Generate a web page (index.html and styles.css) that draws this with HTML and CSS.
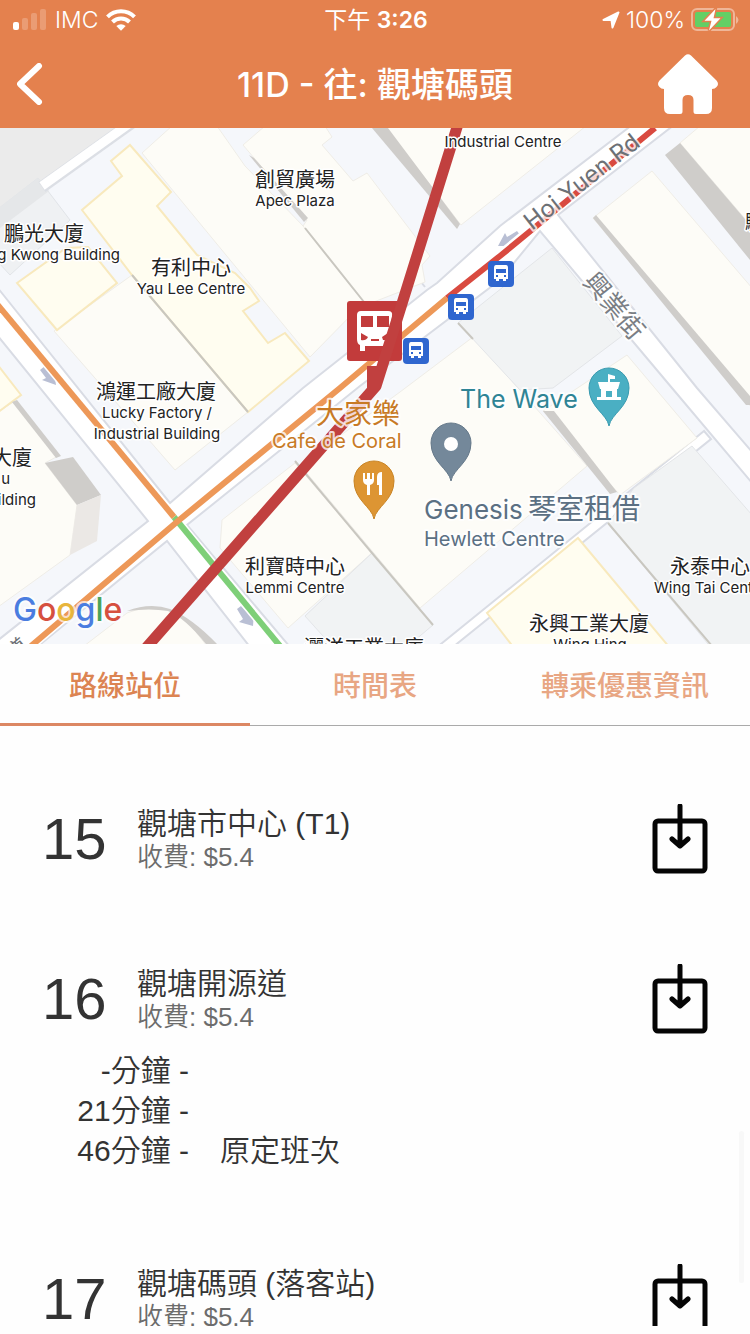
FILE: index.html
```html
<!DOCTYPE html>
<html lang="zh-Hant">
<head>
<meta charset="utf-8">
<meta name="viewport" content="width=device-width, initial-scale=1">
<title>11D - 往: 觀塘碼頭</title>
<link rel="stylesheet" href="styles.css">
</head>
<body>
<div class="app">
  <header class="header">
    <div class="status">
      <div class="status-side">
        <svg class="signal" viewBox="0 0 34 22" aria-hidden="true">
          <rect x="0" y="13" width="6" height="8" rx="2" fill="#fff"/>
          <g fill="#fff" fill-opacity=".22"><rect x="9" y="9" width="6" height="12" rx="2"/><rect x="18" y="4" width="6" height="17" rx="2"/><rect x="27" y="0" width="6" height="21" rx="2"/></g>
        </svg>
        <span>IMC</span>
        <svg class="wifi" viewBox="0 0 30 22" aria-hidden="true">
          <g fill="none" stroke="#fff" stroke-width="4"><path d="M1.500 7.800A19 19 0 0 1 28.500 7.800"/><path d="M6.500 13A12 12 0 0 1 23.500 13"/></g>
          <path d="M10.300 17A7 7 0 0 1 19.700 17L15 21.800Z" fill="#fff"/>
        </svg>
      </div>
      <div class="clock">下午 <b>3:26</b></div>
      <div class="status-side status-right">
        <svg class="location" viewBox="0 0 18 18" aria-hidden="true"><path d="M16.500 1.500L10.500 16.500L9.500 9H1.500Z" fill="#fff" stroke="#fff" stroke-width="2" stroke-linejoin="round"/></svg>
        <span>100%</span>
        <svg class="battery" viewBox="0 0 48 24" aria-hidden="true">
          <rect x="1" y="1" width="42" height="21" rx="5" fill="none" stroke="#fff" stroke-opacity=".42" stroke-width="2"/>
          <path d="M45 8Q50 12 45 16Z" fill="#fff" fill-opacity=".42"/>
          <rect x="4" y="4" width="36" height="15" rx="2" fill="#63cf65"/>
          <path d="M24.500 1L13.500 12.800H20.500L18 22.500L29.500 10.300H22.500Z" fill="#fff" stroke="#e4814e" stroke-width="3" paint-order="stroke"/>
        </svg>
      </div>
    </div>
    <nav class="nav">
      <button class="icon-button" aria-label="返回"><svg class="back" viewBox="0 0 26 42"><path d="M22 3L3 21L22 39" fill="none" stroke="#fff" stroke-width="6" stroke-linecap="round" stroke-linejoin="round"/></svg></button>
      <h1>11D - 往: 觀塘碼頭</h1>
      <button class="icon-button" aria-label="主頁"><svg class="home" viewBox="0 0 60 60"><path d="M27 1.500Q30-1 33 1.500L58.500 26.500Q61.500 30 58.500 33Q57 35 54 35V54Q54 60 48 60H38Q35.500 60 35.500 57.500V46Q35.500 41 30 41Q24.500 41 24.500 46V57.500Q24.500 60 22 60H12Q6 60 6 54V35Q3 35 1.500 33Q-1.500 30 1.500 26.500Z" fill="#fff"/></svg></button>
    </nav>
  </header>

  <svg class="map" viewBox="0 128 750 516" role="img" aria-label="地圖">
    <rect y="128" width="750" height="516" fill="#f5f7fb"/>
    <path d="M0 128H118L0 214Z" fill="#ebebeb"/>
    <path d="M-2 209L38 178L70 220L10 275L-2 262Z" fill="#eff1f3" stroke="#e1e4e8"/>
    <path d="M0 207L38 178L49 191L0 228Z" fill="#e5e7e9"/>
    <g fill="none" stroke-linecap="butt">
      <path d="M42 187L133 122" stroke="#dcdfe5" stroke-width="12"/>
      <path d="M42 186L133 121" stroke="#fff" stroke-width="9"/>
    </g>

    <g class="roads">
      <path d="M-3 287L170 503L303 388L427 290L437 283L500 226L632 125H674L558 215L697 388L753 453V484L672 388L540 231L500 280L360 386L187 525L290 647H250L167 541L37 647H-3V641L148 521L-3 335Z"/>
      <path d="M704 431L436 648L443 655L711 439Z"/>
      <path d="M320 155L425 287"/>
    </g>

    <g class="tan">
      <path d="M142 153L172 126H217L245 166L305 228L364 302L310 357Z"/>
      <path d="M243 145L265 126H325L332 137L322 145L353 181L367 173L430 256L422 265L425 282L366 305L303 226L307 220Z"/>
      <path d="M385 126H586L461 225Z"/>
      <path d="M54 331L132 275L248 412L175 470Z"/>
      <path d="M-2 412L15 401L58 456L45 463L77 505L70 555L-2 607Z"/>
      <path d="M652 171L752 288V408L593 218Z"/>
      <path d="M680 143L700 126H752V227Z"/>
      <path d="M473 337L587 466L420 608L300 465L400 392Z"/>
      <path d="M627 355L697 438L620 495L543 411Z"/>
      <path d="M295 463L372 553L288 628L220 548L222 520Z"/>
      <path d="M127 613Q160 600 185 618L207 646H84Z"/>
    </g>
    <g class="yellow">
      <path d="M130 145L171 192L157 206L197 255L235 273L250 288L259 301L243 311L268 343L285 333L309 361L248 412L132 275L82 210L122 176L111 161Z"/>
      <path d="M17 283L66 248L88 247L117 283L57 330Z"/>
      <path d="M-3 364L21 395L-3 413Z"/>
      <path d="M578 538L670 648H514L487 613Z"/>
    </g>
    <g fill="#f1f3f4" stroke="#e3e5e8">
      <path d="M552 248L622 336L553 388L520 390L458 323Z"/>
      <path d="M372 553L433 625L408 646H332L305 616Z"/>
      <path d="M692 446L752 515V650H713L608 523L634 488Z"/>
    </g>
    <g fill="#cfcdca">
      <path d="M372 128H388L460 224L457 229Z"/>
      <path d="M665 155L680 143L750 225V260Z"/>
      <path d="M593 218L596 215L750 396V405H746Z"/>
      <path d="M543 411H554L617 492L610 494Z"/>
      <path d="M45 463L73 457L101 495L77 505Z"/>
      <path d="M77 505L101 495L97 541L70 555Z" fill="#ebe8e5"/>
      <path d="M12 402L17 400L61 456L56 458Z"/>
      <path d="M127 611Q150 602 170 609Q192 618 217 644H206Q185 618 168 611Q150 608 127 611Z"/>
      <path d="M249 155L254 158L308 218L304 222Z"/>
    </g>
    <g fill="none" stroke="#c9c7c0" stroke-width="2">
      <path d="M132 275L248 412M305 228L364 302M295 461L372 553L433 625M458 323L473 339M608 523L712 646"/>
    </g>

    <g fill="#b9bfd4">
      <path d="M498 246L505 233L507 237L517 231L520 235L509 242L512 246Z"/>
      <path d="M40 370L45 366L51 374L54 371L56 385L42 380L46 378Z"/>
      <path d="M237 609L241 606L249 614L254 612L253 626L239 622L243 619Z"/>
    </g>

    <g fill="none" stroke-width="9" stroke="#fff">
      <path d="M-3 304L174 517L280 646M31 646L178 521L447 298L655 128"/>
    </g>
    <g fill="none" stroke-width="6">
      <path d="M174 517L280 646" stroke="#7ecf78"/>
      <path d="M-3 304L174 517" stroke="#ed9858"/>
      <path d="M31 646L178 521L340 388L447 298" stroke="#ed9858"/>
      <path d="M447 298L500 256L528 233L655 128" stroke="#d94a40"/>
    </g>

    <rect x="347" y="301" width="55" height="60" rx="3" fill="#c23b3b"/>
    <path d="M361 311H388Q393 311 392 316L389 341Q389 346 384 346H365V351H360V345Q357 344 357 339V315Q357 311 361 311Z" fill="#fff"/>
    <path d="M361 316H373V327H361ZM377 316H389V327H377ZM361 333L368 337Q366 341 361 340ZM382 337L388 333V340H383ZM371 339H379V341H371Z" fill="#c23b3b"/>
    <g fill="none" stroke="#c1403f" stroke-width="11" stroke-linejoin="round">
      <path d="M458 124L400 310L376 386L146 648"/>
      <path d="M373 366V388" stroke-width="12"/>
    </g>

    <g class="pins">
      <g class="stop"><rect x="448" y="294" width="26" height="26" rx="4"/><path d="M456 298H466Q468 298 468 301V312H466V314H463V312H459V314H456V312H454V301Q454 298 456 298Z"/><path d="M456 302H466V306H456ZM456 308H458V310H456ZM464 308H466V310H464Z"/></g>
      <g class="stop"><rect x="488" y="261" width="26" height="26" rx="4"/><path d="M496 265H506Q508 265 508 268V279H506V281H503V279H499V281H496V279H494V268Q494 265 496 265Z"/><path d="M496 269H506V273H496ZM496 275H498V277H496ZM504 275H506V277H504Z"/></g>
      <g class="stop"><rect x="403" y="338" width="26" height="26" rx="4"/><path d="M411 342H421Q423 342 423 345V356H421V358H418V356H414V358H411V356H409V345Q409 342 411 342Z"/><path d="M411 346H421V350H411ZM411 352H413V354H411ZM419 352H421V354H419Z"/></g>
    </g>

    <path d="M374 519C372 507 354 500 354 481A20 20 0 0 1 394 481C394 500 376 507 374 519Z" fill="#dd9533" stroke="#c98425"/>
    <path d="M363 473H365V479H367V473H370V479H372V473H374V480Q374 484 370 485V495H367V485Q363 484 363 480ZM377 477Q377 472 382 472V495H379V485H377Z" fill="#fff"/>
    <path d="M451 481C449 469 431 462 431 443A20 20 0 0 1 471 443C471 462 453 469 451 481Z" fill="#74889a" stroke="#66798a"/>
    <circle cx="451" cy="444" r="7" fill="#fff"/>
    <path d="M609 426C607 414 589 407 589 388A20 20 0 0 1 629 388C629 407 611 414 609 426Z" fill="#4aafc3" stroke="#3a9bb0"/>
    <path d="M608 374L615 376V379H610V382H620L618 389H617V397H621V400H597V397H601V389H600L598 382H608Z" fill="#fff"/>
    <path d="M606 391H612V397H606Z" fill="#4aafc3"/>

    <g class="label">
      <g class="zh">
        <text x="295" y="187">創貿廣場</text><text x="44" y="241">鵬光大廈</text><text x="191" y="275">有利中心</text>
        <text x="156" y="399">鴻運工廠大廈</text><text x="295" y="574">利寶時中心</text><text x="589" y="631">永興工業大廈</text>
        <text x="710" y="574">永泰中心</text><text x="364" y="655">灑洋工業大廈</text><text x="12" y="465">大廈</text>
        <text x="755" y="230">駿</text>
      </g>
      <text x="503" y="147">Industrial Centre</text><text x="295" y="206">Apec Plaza</text><text x="120" y="260" text-anchor="end">g Kwong Building</text>
      <text x="191" y="294">Yau Lee Centre</text><text x="157" y="418">Lucky Factory /</text><text x="157" y="439">Industrial Building</text>
      <text x="295" y="593">Lemmi Centre</text><text x="590" y="650">Wing Hing</text><text x="654" y="593" text-anchor="start">Wing Tai Centre</text>
      <text x="10" y="484" text-anchor="end">u</text><text x="36" y="505" text-anchor="end">ilding</text>
    </g>
    <g class="poi">
      <text x="316" y="424" font-size="28" fill="#c87a25">大家樂</text><text x="272" y="448" font-size="20" fill="#c87a25">Cafe de Coral</text>
      <text x="460" y="408" font-size="25" fill="#2f8495">The Wave</text>
      <text x="424" y="519" font-size="26" fill="#5b7083">Genesis</text><text x="528" y="519" font-size="28" fill="#5b7083">琴室租借</text>
      <text x="424" y="546" font-size="20" fill="#5b7083">Hewlett Centre</text>
      <text x="0" y="0" font-size="24" fill="#6c7075" transform="translate(532 231) rotate(-38)">Hoi Yuen Rd</text>
      <text x="0" y="0" font-size="26" fill="#7a7e84" transform="translate(582 282) rotate(50)">興業街</text>
      <text x="0" y="0" font-size="20" fill="#6c7075" transform="translate(14 660) rotate(-40)">道</text>
    </g>
    <text class="logo" x="13" y="621"><tspan fill="#4a7de0">G</tspan><tspan fill="#d6503f">o</tspan><tspan fill="#e8b53c">o</tspan><tspan fill="#4a7de0">g</tspan><tspan fill="#4aa35a">l</tspan><tspan fill="#d6503f">e</tspan></text>
  </svg>

  <div class="tabs" role="tablist">
    <button class="tab active" role="tab" aria-selected="true">路線站位</button>
    <button class="tab" role="tab" aria-selected="false">時間表</button>
    <button class="tab" role="tab" aria-selected="false">轉乘優惠資訊</button>
  </div>

  <main class="list">
    <ol class="stops">
      <li class="stop-item">
        <div class="stop-head">
          <span class="number">15</span>
          <div class="info"><h2>觀塘市中心 (T1)</h2><p>收費: $5.4</p></div>
          <button class="icon-button" aria-label="落車提示 15"><svg class="alight" viewBox="0 0 56 70"><rect x="3" y="17" width="50" height="50" rx="3"/><path d="M28 2V41M20 35L28 42L36 35"/></svg></button>
        </div>
      </li>
      <li class="stop-item">
        <div class="stop-head">
          <span class="number">16</span>
          <div class="info"><h2>觀塘開源道</h2><p>收費: $5.4</p></div>
          <button class="icon-button" aria-label="落車提示 16"><svg class="alight" viewBox="0 0 56 70"><rect x="3" y="17" width="50" height="50" rx="3"/><path d="M28 2V41M20 35L28 42L36 35"/></svg></button>
        </div>
        <ul class="times">
          <li><span class="eta">-分鐘 -</span></li>
          <li><span class="eta">21分鐘 -</span></li>
          <li><span class="eta">46分鐘 -</span><span>原定班次</span></li>
        </ul>
      </li>
      <li class="stop-item">
        <div class="stop-head">
          <span class="number">17</span>
          <div class="info"><h2>觀塘碼頭 (落客站)</h2><p>收費: $5.4</p></div>
          <button class="icon-button" aria-label="落車提示 17"><svg class="alight" viewBox="0 0 56 70"><rect x="3" y="17" width="50" height="50" rx="3"/><path d="M28 2V41M20 35L28 42L36 35"/></svg></button>
        </div>
      </li>
    </ol>
    <div class="scroll-thumb"></div>
  </main>
</div>
</body>
</html>
```
FILE: styles.css
```css
* { box-sizing: border-box; margin: 0; padding: 0; }
body { background: #fefefe; color: #333; font-family: "Liberation Sans", "Noto Sans CJK TC", sans-serif; }
button { font: inherit; color: inherit; background: none; border: 0; cursor: pointer; }
svg { display: block; }
ol, ul { list-style: none; }

.app { display: flex; flex-direction: column; height: 100vh; padding-bottom: 8px; overflow: hidden; }

.header { flex: none; background: #e4814e; color: #fff; font-family: Inter, "Noto Sans CJK TC", sans-serif; }
.status { display: grid; grid-template-columns: 1fr auto 1fr; align-items: center; height: 40px; padding: 0 11px 0 13px; font-size: 23px; line-height: 40px; font-weight: 300; }
.status-side { display: flex; align-items: center; gap: 8px; }
.status-right { justify-content: flex-end; gap: 6px; }
.clock { font-weight: 400; }
.clock b { font-weight: 600; }
.signal { width: 34px; height: 22px; }
.wifi { width: 30px; height: 22px; }
.location { width: 18px; height: 18px; }
.battery { width: 48px; height: 24px; }
.nav { display: grid; grid-template-columns: 1fr auto 1fr; align-items: center; height: 88px; padding: 0 32px 0 17px; column-gap: 16px; }
.nav { padding-left: 32px; }
.nav .icon-button:first-child { justify-self: start; margin-left: -15px; }
.nav .icon-button:last-child { justify-self: end; }
.nav h1 { font-size: 34px; font-weight: 500; line-height: 48px; padding-top: 2px; }
.back { width: 26px; height: 42px; }
.home { width: 60px; height: 60px; }

.map { flex: none; width: 100%; height: auto; aspect-ratio: 750 / 516; }
.roads path { fill: #fff; stroke: #d9dce4; stroke-width: 2; }
.tan path { fill: #fdfcf7; stroke: #efede7; }
.yellow path { fill: #fffdf0; stroke: #f8e9bd; stroke-width: 2; }
.label text { font-family: Inter, "Noto Sans CJK TC", sans-serif; font-size: 15px; text-anchor: middle; fill: #222; stroke: #fff; stroke-width: 3px; stroke-linejoin: round; paint-order: stroke; }
.label .zh text { font-size: 20px; }
.label text[text-anchor="end"] { text-anchor: end; }
.label text[text-anchor="start"] { text-anchor: start; }
.poi text { font-family: Inter, "Noto Sans CJK TC", sans-serif; stroke: #fff; stroke-opacity: .8; stroke-width: 4px; stroke-linejoin: round; paint-order: stroke; }
.stop rect { fill: #2f66cf; }
.stop path { fill: #fff; }
.stop path:last-child { fill: #2f66cf; }
.logo { font-family: Inter, sans-serif; font-size: 32px; font-weight: 500; stroke: #fff; stroke-opacity: .7; stroke-width: 4px; paint-order: stroke; }

.tabs { flex: none; display: grid; grid-template-columns: repeat(3, 1fr); height: 82px; border-bottom: 1px solid #aaa; }
.tab { height: 82px; font-size: 28px; font-weight: 500; color: #e8a683; border-bottom: 3px solid transparent; }
.tab.active { color: #dc8452; border-bottom-color: #dc8763; }

.list { position: relative; flex: 1; min-height: 0; overflow: hidden; padding-top: 78px; }
.stop-item { padding: 0 42px 90px; }
.stop-head { display: flex; align-items: center; height: 70px; }
.number { width: 95px; font-size: 58px; line-height: 70px; }
.info { flex: 1; padding-top: 2px; }
.info h2 { font-size: 30px; font-weight: 350; line-height: 34px; }
.info p { font-size: 26px; font-weight: 350; line-height: 32px; color: #6c6c6c; }
.alight { width: 56px; height: 70px; fill: none; stroke: #050505; stroke-width: 5; stroke-linecap: round; stroke-linejoin: round; }
.times { padding: 17px 0 3px; font-size: 30px; font-weight: 350; line-height: 40px; }
.times li { display: flex; gap: 31px; }
.eta { width: 147px; text-align: right; }
.scroll-thumb { position: absolute; right: 6px; bottom: 43px; width: 5px; height: 152px; border-radius: 3px; background: #f8f8f8; }
```
